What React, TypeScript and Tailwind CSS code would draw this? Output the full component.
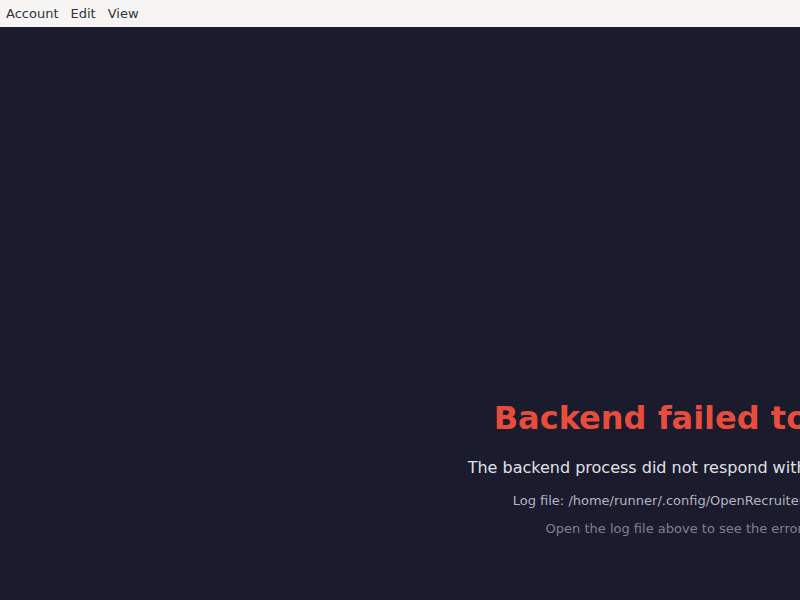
export default function App() {
  return (
    <div
      className="w-screen h-screen overflow-hidden bg-[#1b1b2e]"
      style={{ fontFamily: '"DejaVu Sans", sans-serif' }}
    >
      <div className="w-[1400px] h-[900px] flex flex-col">
        <div className="h-[27px] bg-[#f6f5f4] flex items-center px-[6px] gap-[12px] text-[13px] text-[#2e3436] shrink-0">
          <span>Account</span>
          <span>Edit</span>
          <span>View</span>
        </div>
        <div className="flex-1 flex flex-col items-center pt-[371px] text-center">
          <h1 className="text-[32px] font-bold text-[#e74c3c] leading-[40px]">
            Backend failed to start
          </h1>
          <p className="mt-[18px] text-[16px] leading-[24px] text-[#e0e0e6]">
            The backend process did not respond within 120 seconds.
          </p>
          <p className="mt-[11px] text-[13px] leading-[19.5px] text-[#b4b4be]">
            Log file: /home/runner/.config/OpenRecruiter/backend.log
          </p>
          <p className="mt-[8px] text-[13px] leading-[19.5px] text-[#80808c]">
            Open the log file above to see the error details.
          </p>
        </div>
      </div>
    </div>
  );
}
